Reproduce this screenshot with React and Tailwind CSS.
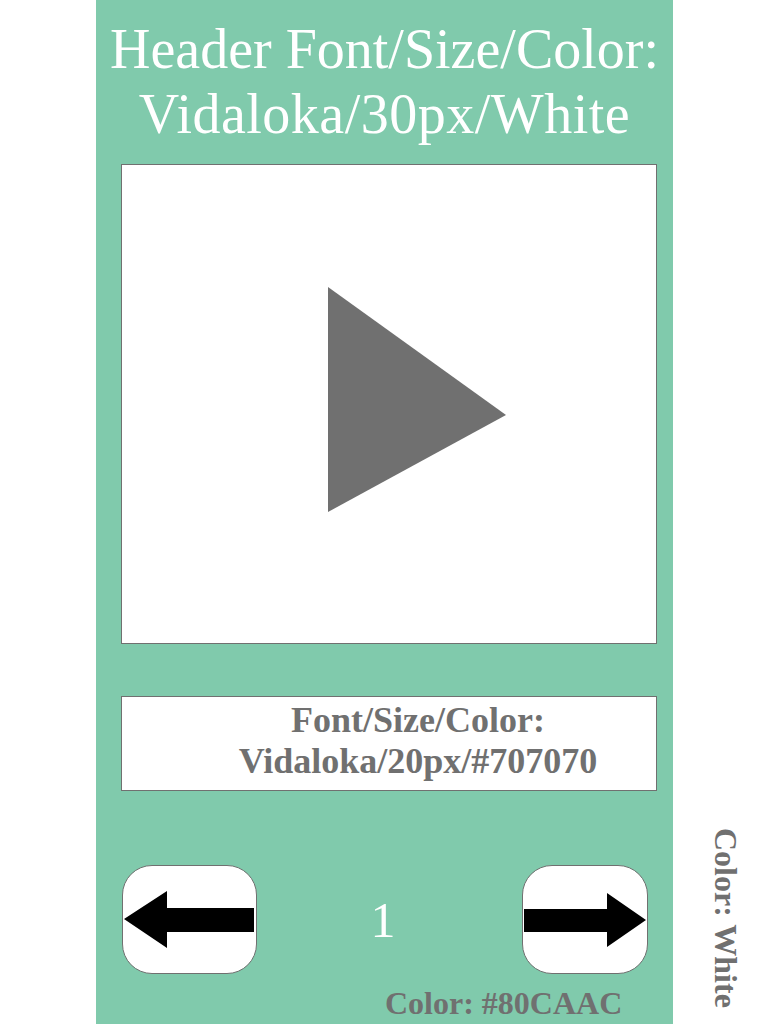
const SERIF = 'font-["Liberation_Serif","Times_New_Roman",serif]'

function ArrowButton({ dir, className }) {
  const points =
    dir === 'left'
      ? '2,54 45,26 45,43 132,43 132,67 45,67 45,83'
      : '2,44 85,44 85,28 124,55 85,82 85,67 2,67'
  return (
    <button className={`h-[109px] shrink-0 rounded-[30px] border border-[#707070] bg-white p-0 ${className}`}>
      <svg className="block h-full w-full" viewBox={dir === 'left' ? '1 1 133 107' : '1 1 124 107'}>
        <polygon points={points} fill="#000" />
      </svg>
    </button>
  )
}

export default function App() {
  return (
    <div className={`flex min-h-[1024px] bg-white ${SERIF}`}>
      {/* mobile mock panel */}
      <div className="ml-[96px] flex min-h-[1024px] w-[577px] shrink-0 flex-col bg-[#80CAAC]">
        <h1 className="pt-[17px] text-center text-[56px] leading-[65px] font-normal text-white">
          Header Font/Size/Color:
          <br />
          <span className="tracking-[0.5px]">Vidaloka/30px/White</span>
        </h1>

        <div className="mt-[17px] ml-[25px] h-[480px] w-[536px] border border-[#707070] bg-white pt-[122px] pl-[206px]">
          <svg width="178" height="225" viewBox="0 0 178 225" className="block">
            <polygon points="0,0 178,128 0,225" fill="#707070" />
          </svg>
        </div>

        <div className="mt-[52px] ml-[25px] h-[95px] w-[536px] border border-[#707070] bg-white pt-[3px] pl-[58px] text-center text-[36px] leading-[41px] font-bold text-[#707070]">
          Font/Size/Color:
          <br />
          Vidaloka/20px/#707070
        </div>

        <div className="mt-[74px] flex items-center">
          <ArrowButton dir="left" className="ml-[26px] w-[135px]" />
          <span className="ml-[101px] w-[50px] text-center text-[50px] leading-[50px] text-white">1</span>
          <ArrowButton dir="right" className="ml-[114px] w-[126px]" />
        </div>

        <p className="mt-[13px] ml-[289px] text-[32px] leading-[32px] font-bold text-[#707070]">
          Color: #80CAAC
        </p>
      </div>

      <div className="mt-[828px] ml-[37px] text-[32px] leading-[32px] font-bold text-[#707070] [writing-mode:vertical-rl]">
        Color: White
      </div>
    </div>
  )
}
